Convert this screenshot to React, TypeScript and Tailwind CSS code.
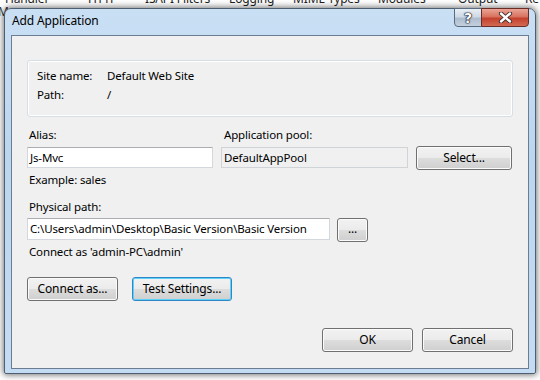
const BTN =
  "flex h-[24px] items-center justify-center rounded-[3px] border border-[#707070] bg-[linear-gradient(to_bottom,#f2f2f2_0%,#ebebeb_50%,#dddddd_50%,#cfcfcf_100%)] shadow-[inset_0_0_0_1px_#fbfbfb] text-[12px] leading-[16px] text-black";

function CloseGlyph() {
  return (
    <svg width="15" height="11" viewBox="0 0 15 11" aria-hidden>
      <path d="M3 1.5 L12 9.5 M12 1.5 L3 9.5" stroke="#3b2a2a" strokeWidth="4.2" strokeLinecap="round" />
      <path d="M3 1.5 L12 9.5 M12 1.5 L3 9.5" stroke="#ffffff" strokeWidth="2.4" strokeLinecap="round" />
    </svg>
  );
}

export default function App() {
  return (
    <div className="relative h-[380px] w-[540px] overflow-hidden bg-white font-['Noto_Sans',sans-serif] text-[11.5px] tracking-[-0.15px] text-black">
      {/* the IIS feature list peeking out behind the dialog */}
      <div className="absolute left-0 top-[-9px] flex text-[12px] leading-[16px] text-[#1e1e1e]">
        <span className="ml-[5px] w-[83px]">Handler</span>
        <span className="w-[57px]">HTTP</span>
        <span className="w-[84px]">ISAPI Filters</span>
        <span className="w-[64px]">Logging</span>
        <span className="w-[85px]">MIME Types</span>
        <span className="w-[80px]">Modules</span>
        <span className="w-[67px]">Output</span>
        <span>Re</span>
      </div>
      <span className="absolute left-[-2px] top-[4px] text-[12px] leading-[16px] text-[#333]">M</span>

      {/* dialog window */}
      <div className="absolute left-[4px] top-[8px] flex h-[366px] w-[532px] flex-col rounded-t-[7px] rounded-b-[2px] border border-[#4f5f72] bg-[linear-gradient(to_bottom,#c9dff4_0%,#bcd6f0_40%,#c4dcf3_100%)] shadow-[0_0_6px_1px_rgba(0,0,0,0.55)]">
        <div className="flex h-[26px] shrink-0 items-start">
          <span className="pl-[7px] pt-[4px] text-[12px] leading-[16px] text-black">Add Application</span>
          <div className="ml-auto mr-[6px] -mt-px flex h-[19px]">
            <div className="flex w-[28px] items-center justify-center rounded-bl-[4px] border border-[#5a6b80] bg-[linear-gradient(to_bottom,#e8eef5_0%,#cfdae6_45%,#aebdce_55%,#c3d0de_100%)] font-['DejaVu_Sans',sans-serif] text-[14px] font-bold leading-none text-white [text-shadow:0_0_1px_#112,0_0_1px_#112,0_0_1px_#112,0_0_2px_#334]">
              ?
            </div>
            <div className="-ml-px flex w-[48px] items-center justify-center rounded-br-[4px] border border-[#6b2c26] bg-[linear-gradient(to_bottom,#eaa596_0%,#d8725f_45%,#c4412f_55%,#d26a52_100%)]">
              <CloseGlyph />
            </div>
          </div>
        </div>

        <div className="mx-[6px] mb-[4px] flex flex-1 flex-col border border-[#6a7d92] bg-[#f0f0f0] px-[15px]">
          {/* site info */}
          <div className="mt-[24px] flex h-[57px] flex-col rounded-[3px] border border-[#d5dfe5] pl-[9px] pt-[7px] shadow-[inset_0_0_0_1px_#ffffff]">
            <div className="flex h-[19px] items-start leading-[16px]">
              <span className="w-[70px]">Site name:</span>
              <span>Default Web Site</span>
            </div>
            <div className="flex h-[19px] items-start leading-[16px]">
              <span className="w-[70px]">Path:</span>
              <span>/</span>
            </div>
          </div>

          {/* alias / pool */}
          <div className="mt-[10px] flex h-[16px] leading-[16px]">
            <span className="w-[194px] pl-[2px]">Alias:</span>
            <span className="pl-[3px]">Application pool:</span>
          </div>
          <div className="mt-[3px] flex h-[24px] items-start">
            <div className="mt-px flex h-[21px] w-[186px] items-center border border-[#d3d7de] border-t-[#abadb3] bg-white pl-[2px] leading-[16px]">
              Js-Mvc
            </div>
            <div className="ml-[8px] mt-px flex h-[21px] w-[187px] items-center border border-[#d0d3d8] bg-[#f0f0f0] pl-[2px] leading-[16px]">
              DefaultAppPool
            </div>
            <button className={`${BTN} ml-[8px] w-[96px]`}>Select...</button>
          </div>
          <span className="mt-[2px] h-[16px] pl-[2px] leading-[16px]">Example: sales</span>

          {/* physical path */}
          <span className="mt-[11px] h-[16px] pl-[2px] leading-[16px]">Physical path:</span>
          <div className="mt-[3px] flex h-[24px] items-start">
            <div className="flex h-[22px] w-[303px] items-center border border-[#d3d7de] border-t-[#abadb3] bg-white pl-[2px] leading-[16px]">
              C:\Users\admin\Desktop\Basic Version\Basic Version
            </div>
            <button className={`${BTN} ml-[7px] w-[31px] pb-[2px] text-[10px]`}>...</button>
          </div>
          <span className="mt-[2px] h-[16px] pl-[2px] leading-[16px]">Connect as 'admin-PC\admin'</span>

          <div className="mt-[17px] flex">
            <button className={`${BTN} w-[91px]`}>Connect as...</button>
            <button className={`${BTN} ml-[14px] w-[100px] !border-[#2e88c8] !shadow-[inset_0_0_0_1px_#5fd0f7]`}>
              Test Settings...
            </button>
          </div>

          <div className="mt-[27px] flex justify-end gap-[9px]">
            <button className={`${BTN} w-[91px]`}>OK</button>
            <button className={`${BTN} w-[91px]`}>Cancel</button>
          </div>
        </div>
      </div>
    </div>
  );
}
